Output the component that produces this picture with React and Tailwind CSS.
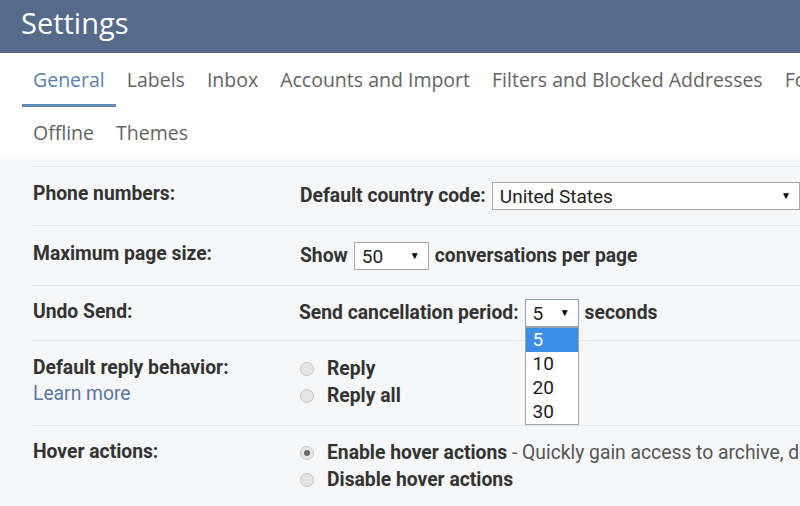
import React from "react";

function Select({ value, className = "", focused = false }) {
  return (
    <div
      className={`relative flex items-center h-full bg-white border ${focused ? "border-[#8fa3bf]" : "border-[#a9a9a9]"} pl-[7px] pr-[8px] ${className}`}
    >
      <span className="flex-1 text-[19px] text-[#222] font-normal leading-none">{value}</span>
      <span className="text-[10px] text-black leading-none">▼</span>
    </div>
  );
}

function Radio({ checked }) {
  return (
    <span className="w-[14px] h-[14px] rounded-full border border-[#c4c4c4] bg-[#e6e6e6] flex items-center justify-center shrink-0">
      {checked && <span className="w-[6px] h-[6px] rounded-full bg-[#6b6b6b]" />}
    </span>
  );
}

export default function App() {
  const tabs = ["General", "Labels", "Inbox", "Accounts and Import", "Filters and Blocked Addresses", "Forwarding and POP/IMAP"];
  return (
    <div
      className="w-[800px] h-[506px] overflow-hidden bg-[#f6f7f8] relative"
      style={{ fontFamily: "Roboto, 'Liberation Sans', sans-serif" }}
    >
      {/* Header */}
      <div className="h-[53px] bg-[#566a89] flex items-center pl-[21px]">
        <span
          className="text-white text-[29px] leading-none -mt-[8px]"
          style={{ fontFamily: "'Open Sans', sans-serif" }}
        >
          Settings
        </span>
      </div>

      {/* Tabs */}
      <div
        className="bg-white h-[106px] pl-[22px] text-[19.5px] text-[#646464]"
        style={{ fontFamily: "'Open Sans', sans-serif" }}
      >
        <div className="flex h-[54px] whitespace-nowrap">
          {tabs.map((t, i) => (
            <div
              key={t}
              className={`h-full shrink-0 flex items-center px-[11px] ${i === 0 ? "text-[#5b7fae] border-b-[3px] border-[#6387b4] pt-[3px]" : ""}`}
            >
              {t}
            </div>
          ))}
        </div>
        <div className="flex h-[52px] items-center">
          <div className="px-[11px] -mt-[1px]">Offline</div>
          <div className="px-[11px] -mt-[1px]">Themes</div>
        </div>
      </div>

      {/* Content */}
      <div className="pl-[32px] text-[19.3px] text-[#222]">
        <div className="border-t border-[#e3e4e6] mt-[7px]" />

        {/* Phone numbers */}
        <div className="flex pt-[15px] pb-[15px] border-b border-[#e3e4e6]">
          <div className="w-[268px] shrink-0 pl-[1px] font-bold text-[#333] leading-[22px] pt-[1px]">Phone numbers:</div>
          <div className="flex items-center h-[28px] whitespace-nowrap">
            <span className="font-bold text-[#333] mr-[6px]">Default country code:</span>
            <Select value="United States" className="w-[308px] shrink-0" />
          </div>
        </div>

        {/* Maximum page size */}
        <div className="flex pt-[16px] pb-[15px] border-b border-[#e3e4e6]">
          <div className="w-[268px] shrink-0 pl-[1px] font-bold text-[#333] leading-[22px] pt-[1px]">Maximum page size:</div>
          <div className="flex items-center h-[28px] whitespace-nowrap">
            <span className="font-bold text-[#333] mr-[6px]">Show</span>
            <Select value="50" className="w-[75px]" />
            <span className="font-bold text-[#333] ml-[6px]">conversations per page</span>
          </div>
        </div>

        {/* Undo Send */}
        <div className="flex pt-[13px] pb-[13px] border-b border-[#e3e4e6]">
          <div className="w-[267px] shrink-0 pl-[1px] font-bold text-[#333] leading-[22px] pt-[2px]">Undo Send:</div>
          <div className="flex items-center h-[28px] whitespace-nowrap">
            <span className="font-bold text-[#333] mr-[6px]">Send cancellation period:</span>
            <div className="relative h-full">
              <Select value="5" className="w-[54px]" focused />
              <div className="absolute left-0 top-[28px] w-[54px] bg-white border border-[#a3a3a3] z-10 text-[19px] text-[#222] leading-[24px]">
                <div className="bg-[#3c8de6] text-white pl-[7px]">5</div>
                <div className="pl-[7px]">10</div>
                <div className="pl-[7px]">20</div>
                <div className="pl-[7px]">30</div>
              </div>
            </div>
            <span className="font-bold text-[#333] ml-[6px]">seconds</span>
          </div>
        </div>

        {/* Default reply behavior */}
        <div className="flex pt-[14px] pb-[16px] border-b border-[#e3e4e6]">
          <div className="w-[268px] shrink-0 pl-[1px] leading-[26px]">
            <div className="font-bold text-[#333]">Default reply behavior:</div>
            <div className="text-[#5b76a0]">Learn more</div>
          </div>
          <div className="leading-[27px] font-bold text-[#333]">
            <div className="flex items-center gap-[13px]"><Radio /> Reply</div>
            <div className="flex items-center gap-[13px]"><Radio /> Reply all</div>
          </div>
        </div>

        {/* Hover actions */}
        <div className="flex pt-[13px]">
          <div className="w-[268px] shrink-0 pl-[1px] leading-[26px] font-bold text-[#333]">Hover actions:</div>
          <div className="leading-[27px] text-[#333] whitespace-nowrap">
            <div className="flex items-center gap-[13px]">
              <Radio checked />
              <span><span className="font-bold">Enable hover actions</span><span className="text-[#555]"> - Quickly gain access to archive, delete, mark as read</span></span>
            </div>
            <div className="flex items-center gap-[13px] font-bold"><Radio /> Disable hover actions</div>
          </div>
        </div>
      </div>
    </div>
  );
}
